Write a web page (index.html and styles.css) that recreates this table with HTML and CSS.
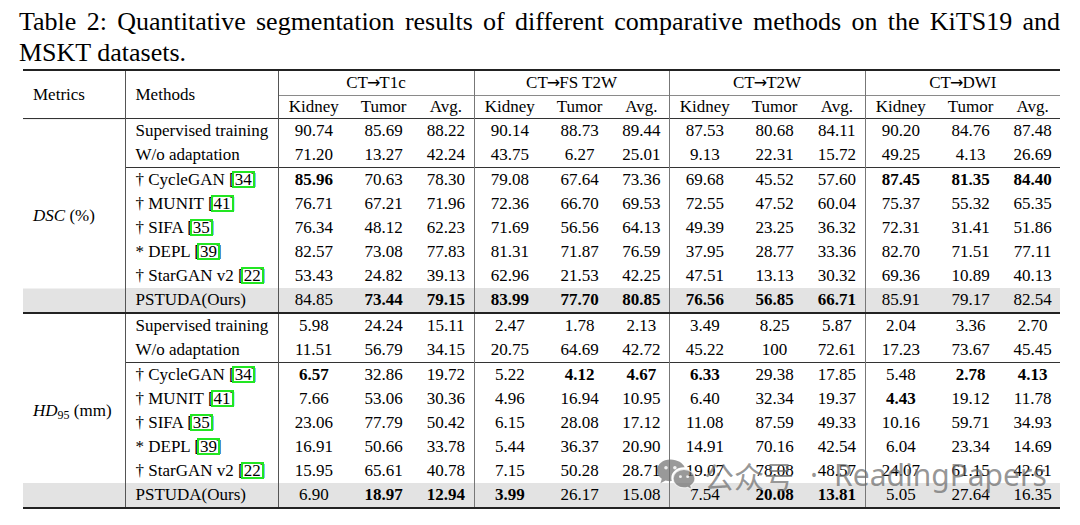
FILE: index.html
```html
<!DOCTYPE html>
<html lang="en">
<head>
<meta charset="utf-8">
<title>Table 2</title>
<link rel="stylesheet" href="styles.css">
</head>
<body>
<main class="page">
  <p class="caption">Table 2: Quantitative segmentation results of different comparative methods on the KiTS19 and MSKT datasets.</p>
  <table class="results">
    <colgroup>
      <col class="c-metric"><col class="c-method">
      <col class="c-k"><col class="c-t"><col class="c-a">
      <col class="c-k"><col class="c-t"><col class="c-a2">
      <col class="c-k"><col class="c-t"><col class="c-a">
      <col class="c-k"><col class="c-t"><col class="c-a2">
    </colgroup>
    <thead>
      <tr class="h1">
        <th rowspan="2" class="metric">Metrics</th>
        <th rowspan="2" class="method">Methods</th>
        <th colspan="3" class="grp">CT<span class="arr">→</span>T1c</th>
        <th colspan="3" class="grp">CT<span class="arr">→</span>FS T2W</th>
        <th colspan="3" class="grp">CT<span class="arr">→</span>T2W</th>
        <th colspan="3" class="grp">CT<span class="arr">→</span>DWI</th>
      </tr>
      <tr class="h2">
        <th class="g">Kidney</th><th>Tumor</th><th>Avg.</th>
        <th class="g">Kidney</th><th>Tumor</th><th>Avg.</th>
        <th class="g">Kidney</th><th>Tumor</th><th>Avg.</th>
        <th class="g">Kidney</th><th>Tumor</th><th>Avg.</th>
      </tr>
    </thead>
    <tbody class="sec">
      <tr>
        <td rowspan="8" class="metric"><i>DSC</i> (%)</td>
        <td class="method">Supervised training</td>
        <td class="g">90.74</td><td>85.69</td><td>88.22</td>
        <td class="g">90.14</td><td>88.73</td><td>89.44</td>
        <td class="g">87.53</td><td>80.68</td><td>84.11</td>
        <td class="g">90.20</td><td>84.76</td><td>87.48</td>
      </tr>
      <tr>
        <td class="method">W/o adaptation</td>
        <td class="g">71.20</td><td>13.27</td><td>42.24</td>
        <td class="g">43.75</td><td>6.27</td><td>25.01</td>
        <td class="g">9.13</td><td>22.31</td><td>15.72</td>
        <td class="g">49.25</td><td>4.13</td><td>26.69</td>
      </tr>
      <tr class="split">
        <td class="method">† CycleGAN [<span class="cite">34</span>]</td>
        <td class="g"><b>85.96</b></td><td>70.63</td><td>78.30</td>
        <td class="g">79.08</td><td>67.64</td><td>73.36</td>
        <td class="g">69.68</td><td>45.52</td><td>57.60</td>
        <td class="g"><b>87.45</b></td><td><b>81.35</b></td><td><b>84.40</b></td>
      </tr>
      <tr>
        <td class="method">† MUNIT [<span class="cite">41</span>]</td>
        <td class="g">76.71</td><td>67.21</td><td>71.96</td>
        <td class="g">72.36</td><td>66.70</td><td>69.53</td>
        <td class="g">72.55</td><td>47.52</td><td>60.04</td>
        <td class="g">75.37</td><td>55.32</td><td>65.35</td>
      </tr>
      <tr>
        <td class="method">† SIFA [<span class="cite">35</span>]</td>
        <td class="g">76.34</td><td>48.12</td><td>62.23</td>
        <td class="g">71.69</td><td>56.56</td><td>64.13</td>
        <td class="g">49.39</td><td>23.25</td><td>36.32</td>
        <td class="g">72.31</td><td>31.41</td><td>51.86</td>
      </tr>
      <tr>
        <td class="method">* DEPL [<span class="cite">39</span>]</td>
        <td class="g">82.57</td><td>73.08</td><td>77.83</td>
        <td class="g">81.31</td><td>71.87</td><td>76.59</td>
        <td class="g">37.95</td><td>28.77</td><td>33.36</td>
        <td class="g">82.70</td><td>71.51</td><td>77.11</td>
      </tr>
      <tr>
        <td class="method">† StarGAN v2 [<span class="cite">22</span>]</td>
        <td class="g">53.43</td><td>24.82</td><td>39.13</td>
        <td class="g">62.96</td><td>21.53</td><td>42.25</td>
        <td class="g">47.51</td><td>13.13</td><td>30.32</td>
        <td class="g">69.36</td><td>10.89</td><td>40.13</td>
      </tr>
      <tr class="ours">
        <td class="method">PSTUDA(Ours)</td>
        <td class="g">84.85</td><td><b>73.44</b></td><td><b>79.15</b></td>
        <td class="g"><b>83.99</b></td><td><b>77.70</b></td><td><b>80.85</b></td>
        <td class="g"><b>76.56</b></td><td><b>56.85</b></td><td><b>66.71</b></td>
        <td class="g">85.91</td><td>79.17</td><td>82.54</td>
      </tr>
    </tbody>
    <tbody class="sec sec2">
      <tr>
        <td rowspan="8" class="metric"><i>HD</i><sub>95</sub> (mm)</td>
        <td class="method">Supervised training</td>
        <td class="g">5.98</td><td>24.24</td><td>15.11</td>
        <td class="g">2.47</td><td>1.78</td><td>2.13</td>
        <td class="g">3.49</td><td>8.25</td><td>5.87</td>
        <td class="g">2.04</td><td>3.36</td><td>2.70</td>
      </tr>
      <tr>
        <td class="method">W/o adaptation</td>
        <td class="g">11.51</td><td>56.79</td><td>34.15</td>
        <td class="g">20.75</td><td>64.69</td><td>42.72</td>
        <td class="g">45.22</td><td>100</td><td>72.61</td>
        <td class="g">17.23</td><td>73.67</td><td>45.45</td>
      </tr>
      <tr class="split">
        <td class="method">† CycleGAN [<span class="cite">34</span>]</td>
        <td class="g"><b>6.57</b></td><td>32.86</td><td>19.72</td>
        <td class="g">5.22</td><td><b>4.12</b></td><td><b>4.67</b></td>
        <td class="g"><b>6.33</b></td><td>29.38</td><td>17.85</td>
        <td class="g">5.48</td><td><b>2.78</b></td><td><b>4.13</b></td>
      </tr>
      <tr>
        <td class="method">† MUNIT [<span class="cite">41</span>]</td>
        <td class="g">7.66</td><td>53.06</td><td>30.36</td>
        <td class="g">4.96</td><td>16.94</td><td>10.95</td>
        <td class="g">6.40</td><td>32.34</td><td>19.37</td>
        <td class="g"><b>4.43</b></td><td>19.12</td><td>11.78</td>
      </tr>
      <tr>
        <td class="method">† SIFA [<span class="cite">35</span>]</td>
        <td class="g">23.06</td><td>77.79</td><td>50.42</td>
        <td class="g">6.15</td><td>28.08</td><td>17.12</td>
        <td class="g">11.08</td><td>87.59</td><td>49.33</td>
        <td class="g">10.16</td><td>59.71</td><td>34.93</td>
      </tr>
      <tr>
        <td class="method">* DEPL [<span class="cite">39</span>]</td>
        <td class="g">16.91</td><td>50.66</td><td>33.78</td>
        <td class="g">5.44</td><td>36.37</td><td>20.90</td>
        <td class="g">14.91</td><td>70.16</td><td>42.54</td>
        <td class="g">6.04</td><td>23.34</td><td>14.69</td>
      </tr>
      <tr>
        <td class="method">† StarGAN v2 [<span class="cite">22</span>]</td>
        <td class="g">15.95</td><td>65.61</td><td>40.78</td>
        <td class="g">7.15</td><td>50.28</td><td>28.71</td>
        <td class="g">19.07</td><td>78.08</td><td>48.57</td>
        <td class="g">24.07</td><td>61.15</td><td>42.61</td>
      </tr>
      <tr class="ours">
        <td class="method">PSTUDA(Ours)</td>
        <td class="g">6.90</td><td><b>18.97</b></td><td><b>12.94</b></td>
        <td class="g"><b>3.99</b></td><td>26.17</td><td>15.08</td>
        <td class="g">7.54</td><td><b>20.08</b></td><td><b>13.81</b></td>
        <td class="g">5.05</td><td>27.64</td><td>16.35</td>
      </tr>
    </tbody>
  </table>
  <div class="watermark" aria-hidden="true">
    <svg class="wm-icon" width="40" height="34" viewBox="0 0 36 30">
      <path class="wm-big" d="M13 1C6 1 1 5.3 1 10.8c0 3.1 1.6 5.8 4.2 7.6L4 22.5l4.6-2.5c1.4.4 2.9.6 4.4.6.4 0 .8 0 1.2-.1-.3-.9-.4-1.8-.4-2.7 0-5.4 5-9.7 11.2-9.7h.8C24.5 4.3 19.3 1 13 1z"/>
      <circle class="wm-dot" cx="9" cy="8.5" r="1.6"/>
      <circle class="wm-dot" cx="17" cy="8.5" r="1.6"/>
      <path class="wm-small" d="M35 18.2c0-4.6-4.4-8.3-9.8-8.3s-9.8 3.7-9.8 8.3 4.4 8.3 9.8 8.3c1.2 0 2.3-.2 3.4-.5l3.6 2-1-3.3c2.3-1.5 3.8-3.8 3.8-6.5z"/>
      <circle class="wm-dot" cx="22" cy="16.5" r="1.3"/>
      <circle class="wm-dot" cx="28.5" cy="16.5" r="1.3"/>
    </svg>
    <span class="wm-cn">公众号</span>
    <span class="wm-sep">·</span>
    <span class="wm-en">ReadingPapers</span>
  </div>
</main>
</body>
</html>
```

FILE: styles.css
```css
html, body {
  margin: 0;
  padding: 0;
  background: #ffffff;
}

.page {
  position: relative;
  width: 1080px;
  height: 525px;
  padding: 6px 0 0 19px;
  box-sizing: border-box;
  font-family: "Liberation Serif", "Times New Roman", serif;
  color: #000;
}

.caption {
  margin: 0;
  width: 1041px;
  font-size: 26px;
  line-height: 31px;
  text-align: justify;
}

.results {
  margin: 1px 0 0 4px;
  width: 1037px;
  table-layout: fixed;
  border-collapse: collapse;
  font-family: "Liberation Serif", "Times New Roman", serif;
  font-size: 17px;
  line-height: 20px;
  border-top: 2px solid #222;
  border-bottom: 2px solid #222;
}

.c-metric { width: 102px; }
.c-method { width: 153px; }
.c-k { width: 71px; }
.c-t { width: 69px; }
.c-a { width: 56px; }
.c-a2 { width: 55px; }

.results th,
.results td {
  padding: 0;
  text-align: center;
  vertical-align: middle;
  font-weight: normal;
  white-space: nowrap;
}

.results .h1 th { height: 24px; }
.results .h2 th { height: 22px; border-top: 1px solid #8a8a8a; }
.results thead { border-bottom: 1px solid #333; }

.arr {
  font-family: "DejaVu Sans", sans-serif;
  font-size: 16px;
  margin: 0 -1px;
}

.results .metric {
  text-align: left;
  padding-left: 10px;
  border-right: 1px solid #555;
}

.results .method {
  text-align: left;
  padding-left: 10px;
  border-right: 1px solid #555;
}

.results .grp { border-left: 1px solid #777; }
.results .g { border-left: 1px solid #777; }

.results tbody td { height: 24px; }
.sec2 tr:first-child td { border-top: 2px solid #222; }
.results tbody .metric {
  background: linear-gradient(to bottom, transparent calc(100% - 24px), #e3e3e3 calc(100% - 24px));
}
.results .split td { border-top: 1px solid #333; }
.results .ours td { background: #e3e3e3; }

.results sub {
  font-size: 12px;
  vertical-align: -3px;
  line-height: 0;
}

.results b { font-weight: bold; }

.cite {
  position: relative;
  display: inline-block;
  line-height: 13px;
  padding: 0 1px;
  margin: 0 -4px 0 -3px;
  border: 2px solid #22e622;
}

.watermark {
  position: absolute;
  left: 656px;
  top: 457px;
  display: flex;
  align-items: center;
  gap: 8px;
  color: rgba(105, 105, 105, 0.7);
  pointer-events: none;
  white-space: nowrap;
}

.wm-icon { display: block; }
.wm-big, .wm-small { fill: rgba(110, 110, 110, 0.7); }
.wm-small { stroke: rgba(255, 255, 255, 0.7); stroke-width: 1; }
.wm-dot { fill: rgba(255, 255, 255, 0.85); }

.wm-cn {
  font-family: "Noto Sans CJK SC", sans-serif;
  font-size: 30px;
  line-height: 36px;
  font-weight: 400;
}

.wm-sep {
  font-family: "Noto Sans", sans-serif;
  font-size: 30px;
  line-height: 36px;
  margin: 0 8px;
}

.wm-en {
  font-family: "Noto Sans", sans-serif;
  font-size: 30px;
  line-height: 36px;
  font-weight: 400;
}
```
